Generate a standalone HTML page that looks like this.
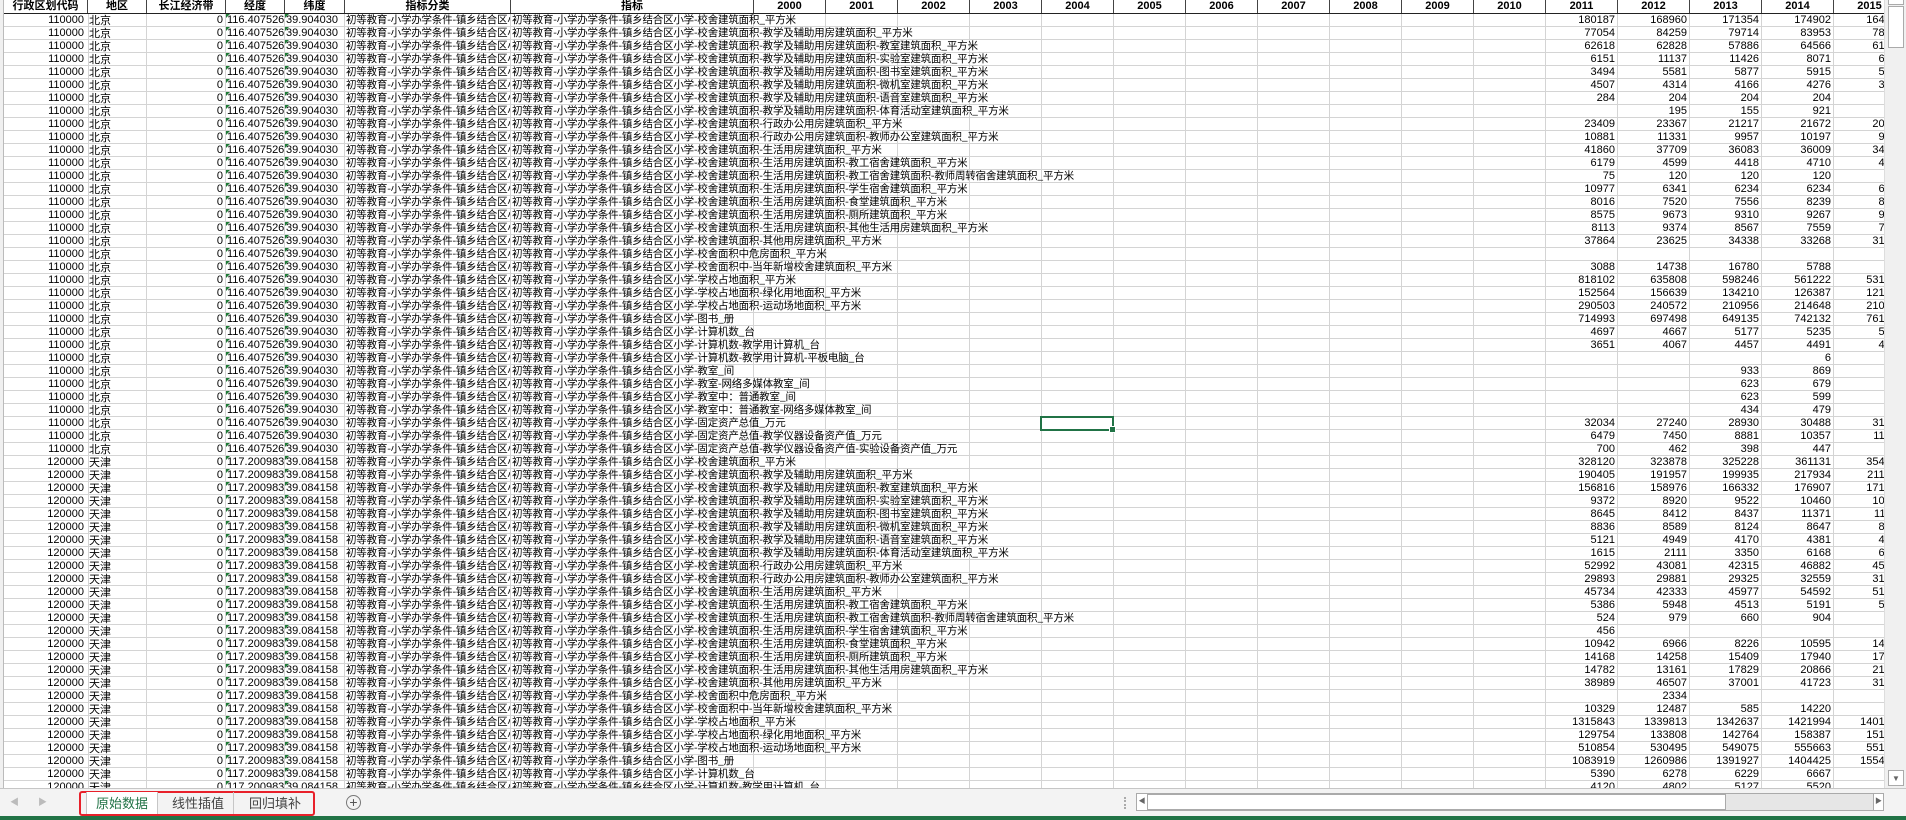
<!DOCTYPE html>
<html><head><meta charset="utf-8">
<style>
*{margin:0;padding:0;box-sizing:border-box}
body{width:1906px;height:820px;overflow:hidden;background:#fff;font-family:"Liberation Sans","Noto Sans CJK SC",sans-serif;font-size:11px;color:#000;position:relative}
#grid{position:absolute;left:0;top:0;width:1884px;height:788px;overflow:hidden;background:#fff}
#hl{position:absolute;left:0;top:14px;width:1884px;height:774px;background:repeating-linear-gradient(to bottom,transparent 0 12px,#d4d4d4 12px 13px)}
.v{position:absolute;top:0;width:1px;height:788px;background:#d4d4d4}
#hdr{position:absolute;left:0;top:0;height:14px;width:1884px;border-bottom:1px solid #222;background:#fff}
#hdr i{position:absolute;top:0;height:13px;line-height:13px;text-align:center;font-weight:bold;font-style:normal;border-right:1px solid #444;font-size:11px}
#rows{position:absolute;left:0;top:14px}
#rows p{position:relative;height:13px;width:1906px}
#rows i{position:absolute;top:0;height:12px;line-height:12px;font-style:normal;white-space:nowrap;overflow:hidden;font-size:11px}
.a{left:4px;width:82px;text-align:right;padding-right:2px}
.b{left:89px;width:57px;font-family:"Noto Sans CJK SC",sans-serif}
.c{left:147px;width:78px;text-align:right;padding-right:2px}
.d{left:226px;width:58px;padding-left:1px}
.e{left:285px;width:59px;padding-left:1px}
.d::before,.e::before{content:"";position:absolute;left:0;top:0;border-top:4px solid #1e7a36;border-right:4px solid transparent}
.f{left:346px;width:164px;font-family:"Noto Sans CJK SC",sans-serif;font-size:10.5px!important;letter-spacing:-.2px}
.g{left:512px;overflow:visible!important;font-family:"Noto Sans CJK SC",sans-serif;font-size:10.5px!important;letter-spacing:-.2px;background:transparent}
.y1,.y2,.y3,.y4,.y5{width:72px;text-align:right;padding-right:3px}
.y1{left:1546px}.y2{left:1618px}.y3{left:1690px}.y4{left:1762px}.y5{left:1834px}
#sel{position:absolute;left:1040px;top:416px;width:74px;height:15px;border:2px solid #217346}
#sel::after{content:"";position:absolute;right:-4px;bottom:-4px;width:5px;height:5px;background:#217346;border:1px solid #fff}
#rh{position:absolute;left:0;top:0;width:4px;height:788px;background:#f0f0f0;border-right:1px solid #bbb}
#vs{position:absolute;left:1884px;top:0;width:22px;height:788px;background:#f0f0f0;border-left:1px solid #ddd}
#tabs{position:absolute;left:0;top:788px;width:1906px;height:28px;background:#f3f3f3;border-top:1px solid #c6c6c6}
#status{position:absolute;left:0;top:816px;width:1906px;height:4px;background:#217346}
.tab{position:absolute;top:3px;height:22px;line-height:21px;font-family:"Noto Sans CJK SC",sans-serif;font-size:13px;color:#444;padding:0 9px;border-right:1px solid #c6c6c6}
</style></head><body>
<div id="grid">
<div id="hl"></div>
<div class="v" style="left:88px"></div><div class="v" style="left:146px"></div><div class="v" style="left:225px"></div><div class="v" style="left:284px"></div><div class="v" style="left:344px"></div><div class="v" style="left:510px"></div><div class="v" style="left:753px"></div>
<div class="v" style="left:825px"></div><div class="v" style="left:897px"></div><div class="v" style="left:969px"></div><div class="v" style="left:1041px"></div><div class="v" style="left:1113px"></div><div class="v" style="left:1185px"></div><div class="v" style="left:1257px"></div><div class="v" style="left:1329px"></div><div class="v" style="left:1401px"></div><div class="v" style="left:1473px"></div><div class="v" style="left:1545px"></div><div class="v" style="left:1617px"></div><div class="v" style="left:1689px"></div><div class="v" style="left:1761px"></div><div class="v" style="left:1833px"></div>
<div id="hdr">
<i style="left:4px;width:84px">行政区划代码</i><i style="left:88px;width:59px">地区</i><i style="left:147px;width:79px">长江经济带</i><i style="left:226px;width:59px">经度</i><i style="left:285px;width:60px">纬度</i><i style="left:345px;width:166px">指标分类</i><i style="left:511px;width:243px">指标</i>
<i style="left:754px;width:72px">2000</i><i style="left:826px;width:72px">2001</i><i style="left:898px;width:72px">2002</i><i style="left:970px;width:72px">2003</i><i style="left:1042px;width:72px">2004</i><i style="left:1114px;width:72px">2005</i><i style="left:1186px;width:72px">2006</i><i style="left:1258px;width:72px">2007</i><i style="left:1330px;width:72px">2008</i><i style="left:1402px;width:72px">2009</i><i style="left:1474px;width:72px">2010</i><i style="left:1546px;width:72px">2011</i><i style="left:1618px;width:72px">2012</i><i style="left:1690px;width:72px">2013</i><i style="left:1762px;width:72px">2014</i><i style="left:1834px;width:72px">2015</i>
</div>
<div id="rows">
<p><i class="a">110000</i><i class="b">北京</i><i class="c">0</i><i class="d">116.407526</i><i class="e">39.904030</i><i class="f">初等教育-小学办学条件-镇乡结合区小学</i><i class="g">初等教育-小学办学条件-镇乡结合区小学-校舍建筑面积_平方米</i><i class="y1">180187</i><i class="y2">168960</i><i class="y3">171354</i><i class="y4">174902</i><i class="y5">164210</i></p>
<p><i class="a">110000</i><i class="b">北京</i><i class="c">0</i><i class="d">116.407526</i><i class="e">39.904030</i><i class="f">初等教育-小学办学条件-镇乡结合区小学</i><i class="g">初等教育-小学办学条件-镇乡结合区小学-校舍建筑面积-教学及辅助用房建筑面积_平方米</i><i class="y1">77054</i><i class="y2">84259</i><i class="y3">79714</i><i class="y4">83953</i><i class="y5">78120</i></p>
<p><i class="a">110000</i><i class="b">北京</i><i class="c">0</i><i class="d">116.407526</i><i class="e">39.904030</i><i class="f">初等教育-小学办学条件-镇乡结合区小学</i><i class="g">初等教育-小学办学条件-镇乡结合区小学-校舍建筑面积-教学及辅助用房建筑面积-教室建筑面积_平方米</i><i class="y1">62618</i><i class="y2">62828</i><i class="y3">57886</i><i class="y4">64566</i><i class="y5">61230</i></p>
<p><i class="a">110000</i><i class="b">北京</i><i class="c">0</i><i class="d">116.407526</i><i class="e">39.904030</i><i class="f">初等教育-小学办学条件-镇乡结合区小学</i><i class="g">初等教育-小学办学条件-镇乡结合区小学-校舍建筑面积-教学及辅助用房建筑面积-实验室建筑面积_平方米</i><i class="y1">6151</i><i class="y2">11137</i><i class="y3">11426</i><i class="y4">8071</i><i class="y5">6912</i></p>
<p><i class="a">110000</i><i class="b">北京</i><i class="c">0</i><i class="d">116.407526</i><i class="e">39.904030</i><i class="f">初等教育-小学办学条件-镇乡结合区小学</i><i class="g">初等教育-小学办学条件-镇乡结合区小学-校舍建筑面积-教学及辅助用房建筑面积-图书室建筑面积_平方米</i><i class="y1">3494</i><i class="y2">5581</i><i class="y3">5877</i><i class="y4">5915</i><i class="y5">5120</i></p>
<p><i class="a">110000</i><i class="b">北京</i><i class="c">0</i><i class="d">116.407526</i><i class="e">39.904030</i><i class="f">初等教育-小学办学条件-镇乡结合区小学</i><i class="g">初等教育-小学办学条件-镇乡结合区小学-校舍建筑面积-教学及辅助用房建筑面积-微机室建筑面积_平方米</i><i class="y1">4507</i><i class="y2">4314</i><i class="y3">4166</i><i class="y4">4276</i><i class="y5">3980</i></p>
<p><i class="a">110000</i><i class="b">北京</i><i class="c">0</i><i class="d">116.407526</i><i class="e">39.904030</i><i class="f">初等教育-小学办学条件-镇乡结合区小学</i><i class="g">初等教育-小学办学条件-镇乡结合区小学-校舍建筑面积-教学及辅助用房建筑面积-语音室建筑面积_平方米</i><i class="y1">284</i><i class="y2">204</i><i class="y3">204</i><i class="y4">204</i></p>
<p><i class="a">110000</i><i class="b">北京</i><i class="c">0</i><i class="d">116.407526</i><i class="e">39.904030</i><i class="f">初等教育-小学办学条件-镇乡结合区小学</i><i class="g">初等教育-小学办学条件-镇乡结合区小学-校舍建筑面积-教学及辅助用房建筑面积-体育活动室建筑面积_平方米</i><i class="y2">195</i><i class="y3">155</i><i class="y4">921</i></p>
<p><i class="a">110000</i><i class="b">北京</i><i class="c">0</i><i class="d">116.407526</i><i class="e">39.904030</i><i class="f">初等教育-小学办学条件-镇乡结合区小学</i><i class="g">初等教育-小学办学条件-镇乡结合区小学-校舍建筑面积-行政办公用房建筑面积_平方米</i><i class="y1">23409</i><i class="y2">23367</i><i class="y3">21217</i><i class="y4">21672</i><i class="y5">20134</i></p>
<p><i class="a">110000</i><i class="b">北京</i><i class="c">0</i><i class="d">116.407526</i><i class="e">39.904030</i><i class="f">初等教育-小学办学条件-镇乡结合区小学</i><i class="g">初等教育-小学办学条件-镇乡结合区小学-校舍建筑面积-行政办公用房建筑面积-教师办公室建筑面积_平方米</i><i class="y1">10881</i><i class="y2">11331</i><i class="y3">9957</i><i class="y4">10197</i><i class="y5">9812</i></p>
<p><i class="a">110000</i><i class="b">北京</i><i class="c">0</i><i class="d">116.407526</i><i class="e">39.904030</i><i class="f">初等教育-小学办学条件-镇乡结合区小学</i><i class="g">初等教育-小学办学条件-镇乡结合区小学-校舍建筑面积-生活用房建筑面积_平方米</i><i class="y1">41860</i><i class="y2">37709</i><i class="y3">36083</i><i class="y4">36009</i><i class="y5">34120</i></p>
<p><i class="a">110000</i><i class="b">北京</i><i class="c">0</i><i class="d">116.407526</i><i class="e">39.904030</i><i class="f">初等教育-小学办学条件-镇乡结合区小学</i><i class="g">初等教育-小学办学条件-镇乡结合区小学-校舍建筑面积-生活用房建筑面积-教工宿舍建筑面积_平方米</i><i class="y1">6179</i><i class="y2">4599</i><i class="y3">4418</i><i class="y4">4710</i><i class="y5">4512</i></p>
<p><i class="a">110000</i><i class="b">北京</i><i class="c">0</i><i class="d">116.407526</i><i class="e">39.904030</i><i class="f">初等教育-小学办学条件-镇乡结合区小学</i><i class="g">初等教育-小学办学条件-镇乡结合区小学-校舍建筑面积-生活用房建筑面积-教工宿舍建筑面积-教师周转宿舍建筑面积_平方米</i><i class="y1">75</i><i class="y2">120</i><i class="y3">120</i><i class="y4">120</i></p>
<p><i class="a">110000</i><i class="b">北京</i><i class="c">0</i><i class="d">116.407526</i><i class="e">39.904030</i><i class="f">初等教育-小学办学条件-镇乡结合区小学</i><i class="g">初等教育-小学办学条件-镇乡结合区小学-校舍建筑面积-生活用房建筑面积-学生宿舍建筑面积_平方米</i><i class="y1">10977</i><i class="y2">6341</i><i class="y3">6234</i><i class="y4">6234</i><i class="y5">6012</i></p>
<p><i class="a">110000</i><i class="b">北京</i><i class="c">0</i><i class="d">116.407526</i><i class="e">39.904030</i><i class="f">初等教育-小学办学条件-镇乡结合区小学</i><i class="g">初等教育-小学办学条件-镇乡结合区小学-校舍建筑面积-生活用房建筑面积-食堂建筑面积_平方米</i><i class="y1">8016</i><i class="y2">7520</i><i class="y3">7556</i><i class="y4">8239</i><i class="y5">8012</i></p>
<p><i class="a">110000</i><i class="b">北京</i><i class="c">0</i><i class="d">116.407526</i><i class="e">39.904030</i><i class="f">初等教育-小学办学条件-镇乡结合区小学</i><i class="g">初等教育-小学办学条件-镇乡结合区小学-校舍建筑面积-生活用房建筑面积-厕所建筑面积_平方米</i><i class="y1">8575</i><i class="y2">9673</i><i class="y3">9310</i><i class="y4">9267</i><i class="y5">9102</i></p>
<p><i class="a">110000</i><i class="b">北京</i><i class="c">0</i><i class="d">116.407526</i><i class="e">39.904030</i><i class="f">初等教育-小学办学条件-镇乡结合区小学</i><i class="g">初等教育-小学办学条件-镇乡结合区小学-校舍建筑面积-生活用房建筑面积-其他生活用房建筑面积_平方米</i><i class="y1">8113</i><i class="y2">9374</i><i class="y3">8567</i><i class="y4">7559</i><i class="y5">7212</i></p>
<p><i class="a">110000</i><i class="b">北京</i><i class="c">0</i><i class="d">116.407526</i><i class="e">39.904030</i><i class="f">初等教育-小学办学条件-镇乡结合区小学</i><i class="g">初等教育-小学办学条件-镇乡结合区小学-校舍建筑面积-其他用房建筑面积_平方米</i><i class="y1">37864</i><i class="y2">23625</i><i class="y3">34338</i><i class="y4">33268</i><i class="y5">31240</i></p>
<p><i class="a">110000</i><i class="b">北京</i><i class="c">0</i><i class="d">116.407526</i><i class="e">39.904030</i><i class="f">初等教育-小学办学条件-镇乡结合区小学</i><i class="g">初等教育-小学办学条件-镇乡结合区小学-校舍面积中危房面积_平方米</i></p>
<p><i class="a">110000</i><i class="b">北京</i><i class="c">0</i><i class="d">116.407526</i><i class="e">39.904030</i><i class="f">初等教育-小学办学条件-镇乡结合区小学</i><i class="g">初等教育-小学办学条件-镇乡结合区小学-校舍面积中-当年新增校舍建筑面积_平方米</i><i class="y1">3088</i><i class="y2">14738</i><i class="y3">16780</i><i class="y4">5788</i></p>
<p><i class="a">110000</i><i class="b">北京</i><i class="c">0</i><i class="d">116.407526</i><i class="e">39.904030</i><i class="f">初等教育-小学办学条件-镇乡结合区小学</i><i class="g">初等教育-小学办学条件-镇乡结合区小学-学校占地面积_平方米</i><i class="y1">818102</i><i class="y2">635808</i><i class="y3">598246</i><i class="y4">561222</i><i class="y5">531240</i></p>
<p><i class="a">110000</i><i class="b">北京</i><i class="c">0</i><i class="d">116.407526</i><i class="e">39.904030</i><i class="f">初等教育-小学办学条件-镇乡结合区小学</i><i class="g">初等教育-小学办学条件-镇乡结合区小学-学校占地面积-绿化用地面积_平方米</i><i class="y1">152564</i><i class="y2">156639</i><i class="y3">134210</i><i class="y4">126387</i><i class="y5">121240</i></p>
<p><i class="a">110000</i><i class="b">北京</i><i class="c">0</i><i class="d">116.407526</i><i class="e">39.904030</i><i class="f">初等教育-小学办学条件-镇乡结合区小学</i><i class="g">初等教育-小学办学条件-镇乡结合区小学-学校占地面积-运动场地面积_平方米</i><i class="y1">290503</i><i class="y2">240572</i><i class="y3">210956</i><i class="y4">214648</i><i class="y5">210120</i></p>
<p><i class="a">110000</i><i class="b">北京</i><i class="c">0</i><i class="d">116.407526</i><i class="e">39.904030</i><i class="f">初等教育-小学办学条件-镇乡结合区小学</i><i class="g">初等教育-小学办学条件-镇乡结合区小学-图书_册</i><i class="y1">714993</i><i class="y2">697498</i><i class="y3">649135</i><i class="y4">742132</i><i class="y5">761240</i></p>
<p><i class="a">110000</i><i class="b">北京</i><i class="c">0</i><i class="d">116.407526</i><i class="e">39.904030</i><i class="f">初等教育-小学办学条件-镇乡结合区小学</i><i class="g">初等教育-小学办学条件-镇乡结合区小学-计算机数_台</i><i class="y1">4697</i><i class="y2">4667</i><i class="y3">5177</i><i class="y4">5235</i><i class="y5">5120</i></p>
<p><i class="a">110000</i><i class="b">北京</i><i class="c">0</i><i class="d">116.407526</i><i class="e">39.904030</i><i class="f">初等教育-小学办学条件-镇乡结合区小学</i><i class="g">初等教育-小学办学条件-镇乡结合区小学-计算机数-教学用计算机_台</i><i class="y1">3651</i><i class="y2">4067</i><i class="y3">4457</i><i class="y4">4491</i><i class="y5">4312</i></p>
<p><i class="a">110000</i><i class="b">北京</i><i class="c">0</i><i class="d">116.407526</i><i class="e">39.904030</i><i class="f">初等教育-小学办学条件-镇乡结合区小学</i><i class="g">初等教育-小学办学条件-镇乡结合区小学-计算机数-教学用计算机-平板电脑_台</i><i class="y4">6</i></p>
<p><i class="a">110000</i><i class="b">北京</i><i class="c">0</i><i class="d">116.407526</i><i class="e">39.904030</i><i class="f">初等教育-小学办学条件-镇乡结合区小学</i><i class="g">初等教育-小学办学条件-镇乡结合区小学-教室_间</i><i class="y3">933</i><i class="y4">869</i></p>
<p><i class="a">110000</i><i class="b">北京</i><i class="c">0</i><i class="d">116.407526</i><i class="e">39.904030</i><i class="f">初等教育-小学办学条件-镇乡结合区小学</i><i class="g">初等教育-小学办学条件-镇乡结合区小学-教室-网络多媒体教室_间</i><i class="y3">623</i><i class="y4">679</i></p>
<p><i class="a">110000</i><i class="b">北京</i><i class="c">0</i><i class="d">116.407526</i><i class="e">39.904030</i><i class="f">初等教育-小学办学条件-镇乡结合区小学</i><i class="g">初等教育-小学办学条件-镇乡结合区小学-教室中：普通教室_间</i><i class="y3">623</i><i class="y4">599</i></p>
<p><i class="a">110000</i><i class="b">北京</i><i class="c">0</i><i class="d">116.407526</i><i class="e">39.904030</i><i class="f">初等教育-小学办学条件-镇乡结合区小学</i><i class="g">初等教育-小学办学条件-镇乡结合区小学-教室中：普通教室-网络多媒体教室_间</i><i class="y3">434</i><i class="y4">479</i></p>
<p><i class="a">110000</i><i class="b">北京</i><i class="c">0</i><i class="d">116.407526</i><i class="e">39.904030</i><i class="f">初等教育-小学办学条件-镇乡结合区小学</i><i class="g">初等教育-小学办学条件-镇乡结合区小学-固定资产总值_万元</i><i class="y1">32034</i><i class="y2">27240</i><i class="y3">28930</i><i class="y4">30488</i><i class="y5">31240</i></p>
<p><i class="a">110000</i><i class="b">北京</i><i class="c">0</i><i class="d">116.407526</i><i class="e">39.904030</i><i class="f">初等教育-小学办学条件-镇乡结合区小学</i><i class="g">初等教育-小学办学条件-镇乡结合区小学-固定资产总值-教学仪器设备资产值_万元</i><i class="y1">6479</i><i class="y2">7450</i><i class="y3">8881</i><i class="y4">10357</i><i class="y5">11240</i></p>
<p><i class="a">110000</i><i class="b">北京</i><i class="c">0</i><i class="d">116.407526</i><i class="e">39.904030</i><i class="f">初等教育-小学办学条件-镇乡结合区小学</i><i class="g">初等教育-小学办学条件-镇乡结合区小学-固定资产总值-教学仪器设备资产值-实验设备资产值_万元</i><i class="y1">700</i><i class="y2">462</i><i class="y3">398</i><i class="y4">447</i></p>
<p><i class="a">120000</i><i class="b">天津</i><i class="c">0</i><i class="d">117.200983</i><i class="e">39.084158</i><i class="f">初等教育-小学办学条件-镇乡结合区小学</i><i class="g">初等教育-小学办学条件-镇乡结合区小学-校舍建筑面积_平方米</i><i class="y1">328120</i><i class="y2">323878</i><i class="y3">325228</i><i class="y4">361131</i><i class="y5">354120</i></p>
<p><i class="a">120000</i><i class="b">天津</i><i class="c">0</i><i class="d">117.200983</i><i class="e">39.084158</i><i class="f">初等教育-小学办学条件-镇乡结合区小学</i><i class="g">初等教育-小学办学条件-镇乡结合区小学-校舍建筑面积-教学及辅助用房建筑面积_平方米</i><i class="y1">190405</i><i class="y2">191957</i><i class="y3">199935</i><i class="y4">217934</i><i class="y5">211240</i></p>
<p><i class="a">120000</i><i class="b">天津</i><i class="c">0</i><i class="d">117.200983</i><i class="e">39.084158</i><i class="f">初等教育-小学办学条件-镇乡结合区小学</i><i class="g">初等教育-小学办学条件-镇乡结合区小学-校舍建筑面积-教学及辅助用房建筑面积-教室建筑面积_平方米</i><i class="y1">156816</i><i class="y2">158976</i><i class="y3">166332</i><i class="y4">176907</i><i class="y5">171240</i></p>
<p><i class="a">120000</i><i class="b">天津</i><i class="c">0</i><i class="d">117.200983</i><i class="e">39.084158</i><i class="f">初等教育-小学办学条件-镇乡结合区小学</i><i class="g">初等教育-小学办学条件-镇乡结合区小学-校舍建筑面积-教学及辅助用房建筑面积-实验室建筑面积_平方米</i><i class="y1">9372</i><i class="y2">8920</i><i class="y3">9522</i><i class="y4">10460</i><i class="y5">10120</i></p>
<p><i class="a">120000</i><i class="b">天津</i><i class="c">0</i><i class="d">117.200983</i><i class="e">39.084158</i><i class="f">初等教育-小学办学条件-镇乡结合区小学</i><i class="g">初等教育-小学办学条件-镇乡结合区小学-校舍建筑面积-教学及辅助用房建筑面积-图书室建筑面积_平方米</i><i class="y1">8645</i><i class="y2">8412</i><i class="y3">8437</i><i class="y4">11371</i><i class="y5">11120</i></p>
<p><i class="a">120000</i><i class="b">天津</i><i class="c">0</i><i class="d">117.200983</i><i class="e">39.084158</i><i class="f">初等教育-小学办学条件-镇乡结合区小学</i><i class="g">初等教育-小学办学条件-镇乡结合区小学-校舍建筑面积-教学及辅助用房建筑面积-微机室建筑面积_平方米</i><i class="y1">8836</i><i class="y2">8589</i><i class="y3">8124</i><i class="y4">8647</i><i class="y5">8512</i></p>
<p><i class="a">120000</i><i class="b">天津</i><i class="c">0</i><i class="d">117.200983</i><i class="e">39.084158</i><i class="f">初等教育-小学办学条件-镇乡结合区小学</i><i class="g">初等教育-小学办学条件-镇乡结合区小学-校舍建筑面积-教学及辅助用房建筑面积-语音室建筑面积_平方米</i><i class="y1">5121</i><i class="y2">4949</i><i class="y3">4170</i><i class="y4">4381</i><i class="y5">4212</i></p>
<p><i class="a">120000</i><i class="b">天津</i><i class="c">0</i><i class="d">117.200983</i><i class="e">39.084158</i><i class="f">初等教育-小学办学条件-镇乡结合区小学</i><i class="g">初等教育-小学办学条件-镇乡结合区小学-校舍建筑面积-教学及辅助用房建筑面积-体育活动室建筑面积_平方米</i><i class="y1">1615</i><i class="y2">2111</i><i class="y3">3350</i><i class="y4">6168</i><i class="y5">6012</i></p>
<p><i class="a">120000</i><i class="b">天津</i><i class="c">0</i><i class="d">117.200983</i><i class="e">39.084158</i><i class="f">初等教育-小学办学条件-镇乡结合区小学</i><i class="g">初等教育-小学办学条件-镇乡结合区小学-校舍建筑面积-行政办公用房建筑面积_平方米</i><i class="y1">52992</i><i class="y2">43081</i><i class="y3">42315</i><i class="y4">46882</i><i class="y5">45120</i></p>
<p><i class="a">120000</i><i class="b">天津</i><i class="c">0</i><i class="d">117.200983</i><i class="e">39.084158</i><i class="f">初等教育-小学办学条件-镇乡结合区小学</i><i class="g">初等教育-小学办学条件-镇乡结合区小学-校舍建筑面积-行政办公用房建筑面积-教师办公室建筑面积_平方米</i><i class="y1">29893</i><i class="y2">29881</i><i class="y3">29325</i><i class="y4">32559</i><i class="y5">31240</i></p>
<p><i class="a">120000</i><i class="b">天津</i><i class="c">0</i><i class="d">117.200983</i><i class="e">39.084158</i><i class="f">初等教育-小学办学条件-镇乡结合区小学</i><i class="g">初等教育-小学办学条件-镇乡结合区小学-校舍建筑面积-生活用房建筑面积_平方米</i><i class="y1">45734</i><i class="y2">42333</i><i class="y3">45977</i><i class="y4">54592</i><i class="y5">51240</i></p>
<p><i class="a">120000</i><i class="b">天津</i><i class="c">0</i><i class="d">117.200983</i><i class="e">39.084158</i><i class="f">初等教育-小学办学条件-镇乡结合区小学</i><i class="g">初等教育-小学办学条件-镇乡结合区小学-校舍建筑面积-生活用房建筑面积-教工宿舍建筑面积_平方米</i><i class="y1">5386</i><i class="y2">5948</i><i class="y3">4513</i><i class="y4">5191</i><i class="y5">5012</i></p>
<p><i class="a">120000</i><i class="b">天津</i><i class="c">0</i><i class="d">117.200983</i><i class="e">39.084158</i><i class="f">初等教育-小学办学条件-镇乡结合区小学</i><i class="g">初等教育-小学办学条件-镇乡结合区小学-校舍建筑面积-生活用房建筑面积-教工宿舍建筑面积-教师周转宿舍建筑面积_平方米</i><i class="y1">524</i><i class="y2">979</i><i class="y3">660</i><i class="y4">904</i></p>
<p><i class="a">120000</i><i class="b">天津</i><i class="c">0</i><i class="d">117.200983</i><i class="e">39.084158</i><i class="f">初等教育-小学办学条件-镇乡结合区小学</i><i class="g">初等教育-小学办学条件-镇乡结合区小学-校舍建筑面积-生活用房建筑面积-学生宿舍建筑面积_平方米</i><i class="y1">456</i></p>
<p><i class="a">120000</i><i class="b">天津</i><i class="c">0</i><i class="d">117.200983</i><i class="e">39.084158</i><i class="f">初等教育-小学办学条件-镇乡结合区小学</i><i class="g">初等教育-小学办学条件-镇乡结合区小学-校舍建筑面积-生活用房建筑面积-食堂建筑面积_平方米</i><i class="y1">10942</i><i class="y2">6966</i><i class="y3">8226</i><i class="y4">10595</i><i class="y5">14120</i></p>
<p><i class="a">120000</i><i class="b">天津</i><i class="c">0</i><i class="d">117.200983</i><i class="e">39.084158</i><i class="f">初等教育-小学办学条件-镇乡结合区小学</i><i class="g">初等教育-小学办学条件-镇乡结合区小学-校舍建筑面积-生活用房建筑面积-厕所建筑面积_平方米</i><i class="y1">14168</i><i class="y2">14258</i><i class="y3">15409</i><i class="y4">17940</i><i class="y5">17120</i></p>
<p><i class="a">120000</i><i class="b">天津</i><i class="c">0</i><i class="d">117.200983</i><i class="e">39.084158</i><i class="f">初等教育-小学办学条件-镇乡结合区小学</i><i class="g">初等教育-小学办学条件-镇乡结合区小学-校舍建筑面积-生活用房建筑面积-其他生活用房建筑面积_平方米</i><i class="y1">14782</i><i class="y2">13161</i><i class="y3">17829</i><i class="y4">20866</i><i class="y5">21240</i></p>
<p><i class="a">120000</i><i class="b">天津</i><i class="c">0</i><i class="d">117.200983</i><i class="e">39.084158</i><i class="f">初等教育-小学办学条件-镇乡结合区小学</i><i class="g">初等教育-小学办学条件-镇乡结合区小学-校舍建筑面积-其他用房建筑面积_平方米</i><i class="y1">38989</i><i class="y2">46507</i><i class="y3">37001</i><i class="y4">41723</i><i class="y5">31240</i></p>
<p><i class="a">120000</i><i class="b">天津</i><i class="c">0</i><i class="d">117.200983</i><i class="e">39.084158</i><i class="f">初等教育-小学办学条件-镇乡结合区小学</i><i class="g">初等教育-小学办学条件-镇乡结合区小学-校舍面积中危房面积_平方米</i><i class="y2">2334</i></p>
<p><i class="a">120000</i><i class="b">天津</i><i class="c">0</i><i class="d">117.200983</i><i class="e">39.084158</i><i class="f">初等教育-小学办学条件-镇乡结合区小学</i><i class="g">初等教育-小学办学条件-镇乡结合区小学-校舍面积中-当年新增校舍建筑面积_平方米</i><i class="y1">10329</i><i class="y2">12487</i><i class="y3">585</i><i class="y4">14220</i></p>
<p><i class="a">120000</i><i class="b">天津</i><i class="c">0</i><i class="d">117.200983</i><i class="e">39.084158</i><i class="f">初等教育-小学办学条件-镇乡结合区小学</i><i class="g">初等教育-小学办学条件-镇乡结合区小学-学校占地面积_平方米</i><i class="y1">1315843</i><i class="y2">1339813</i><i class="y3">1342637</i><i class="y4">1421994</i><i class="y5">1401240</i></p>
<p><i class="a">120000</i><i class="b">天津</i><i class="c">0</i><i class="d">117.200983</i><i class="e">39.084158</i><i class="f">初等教育-小学办学条件-镇乡结合区小学</i><i class="g">初等教育-小学办学条件-镇乡结合区小学-学校占地面积-绿化用地面积_平方米</i><i class="y1">129754</i><i class="y2">133808</i><i class="y3">142764</i><i class="y4">158387</i><i class="y5">151240</i></p>
<p><i class="a">120000</i><i class="b">天津</i><i class="c">0</i><i class="d">117.200983</i><i class="e">39.084158</i><i class="f">初等教育-小学办学条件-镇乡结合区小学</i><i class="g">初等教育-小学办学条件-镇乡结合区小学-学校占地面积-运动场地面积_平方米</i><i class="y1">510854</i><i class="y2">530495</i><i class="y3">549075</i><i class="y4">555663</i><i class="y5">551240</i></p>
<p><i class="a">120000</i><i class="b">天津</i><i class="c">0</i><i class="d">117.200983</i><i class="e">39.084158</i><i class="f">初等教育-小学办学条件-镇乡结合区小学</i><i class="g">初等教育-小学办学条件-镇乡结合区小学-图书_册</i><i class="y1">1083919</i><i class="y2">1260986</i><i class="y3">1391927</i><i class="y4">1404425</i><i class="y5">1554120</i></p>
<p><i class="a">120000</i><i class="b">天津</i><i class="c">0</i><i class="d">117.200983</i><i class="e">39.084158</i><i class="f">初等教育-小学办学条件-镇乡结合区小学</i><i class="g">初等教育-小学办学条件-镇乡结合区小学-计算机数_台</i><i class="y1">5390</i><i class="y2">6278</i><i class="y3">6229</i><i class="y4">6667</i></p>
<p><i class="a">120000</i><i class="b">天津</i><i class="c">0</i><i class="d">117.200983</i><i class="e">39.084158</i><i class="f">初等教育-小学办学条件-镇乡结合区小学</i><i class="g">初等教育-小学办学条件-镇乡结合区小学-计算机数-教学用计算机_台</i><i class="y1">4120</i><i class="y2">4802</i><i class="y3">5127</i><i class="y4">5520</i></p>
</div>
<div id="sel"></div>
<div id="rh"></div>
</div>
<div id="vs">
<div style="position:absolute;left:3px;top:0;width:16px;height:5px;border:1px solid #aaa;border-top:none;background:#fff"></div>
<div style="position:absolute;left:3px;top:6px;width:16px;height:42px;border:1px solid #aaa;background:#fff"></div>
<div style="position:absolute;left:3px;top:770px;width:16px;height:16px;border:1px solid #aaa;background:#fff;font-size:8px;color:#666;text-align:center;line-height:15px">▼</div>
</div>
<div id="tabs">
<span style="position:absolute;left:10px;top:6px;color:#bbb;font-size:9px">◀</span>
<span style="position:absolute;left:38px;top:6px;color:#bbb;font-size:9px">▶</span>
<div style="position:absolute;left:79px;top:2px;width:236px;height:25px;border:2px solid #e8202a;border-radius:3px"></div>
<div class="tab" style="left:86px;background:#fff;color:#217346;border-left:1px solid #c6c6c6">原始数据</div>
<div class="tab" style="left:163px">线性插值</div>
<div class="tab" style="left:240px;border-right:none">回归填补</div>
<div style="position:absolute;left:346px;top:6px;width:15px;height:15px;border:1px solid #777;border-radius:50%;color:#555;font-size:14px;line-height:12px;text-align:center">+</div>
<div style="position:absolute;left:1124px;top:8px;width:2px;height:12px;border-left:2px dotted #aaa"></div>
<div style="position:absolute;left:1136px;top:4px;width:748px;height:18px;border:1px solid #aaa;background:#e6e6e6"></div>
<div style="position:absolute;left:1137px;top:5px;width:10px;height:16px;background:#fff;font-size:7px;color:#666;line-height:16px;text-align:center">◀</div>
<div style="position:absolute;left:1147px;top:5px;width:579px;height:16px;border:1px solid #aaa;background:#fff"></div>
<div style="position:absolute;left:1873px;top:5px;width:10px;height:16px;background:#fff;border-left:1px solid #aaa;font-size:7px;color:#666;line-height:16px;text-align:center">▶</div>
</div>
<div id="status"></div>
</body></html>
